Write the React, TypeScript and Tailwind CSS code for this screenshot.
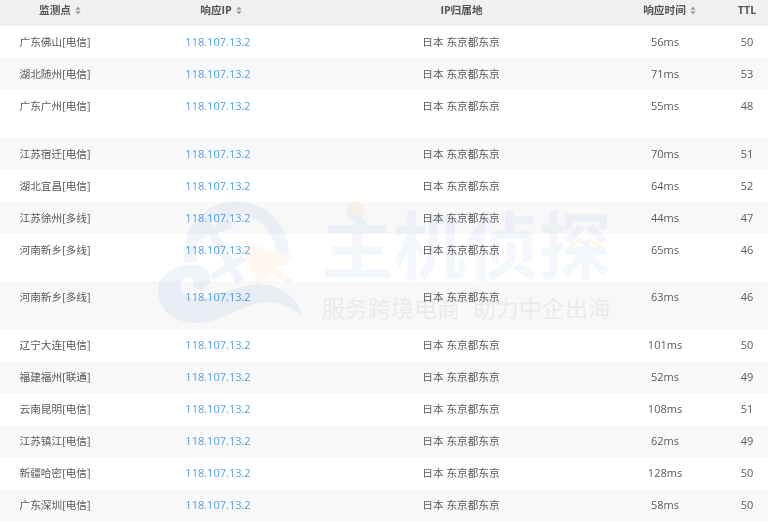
const rows: [string, string, string, string, number][] = [
  ["广东佛山[电信]", "56ms", "50", "h-8", 0],
  ["湖北随州[电信]", "71ms", "53", "h-8", 1],
  ["广东广州[电信]", "55ms", "48", "h-12", 0],
  ["江苏宿迁[电信]", "70ms", "51", "h-8", 1],
  ["湖北宜昌[电信]", "64ms", "52", "h-8", 0],
  ["江苏徐州[多线]", "44ms", "47", "h-8", 1],
  ["河南新乡[多线]", "65ms", "46", "h-[47px]", 0],
  ["河南新乡[多线]", "63ms", "46", "h-12", 1],
  ["辽宁大连[电信]", "101ms", "50", "h-8", 0],
  ["福建福州[联通]", "52ms", "49", "h-8", 1],
  ["云南昆明[电信]", "108ms", "51", "h-8", 0],
  ["江苏镇江[电信]", "62ms", "49", "h-8", 1],
  ["新疆哈密[电信]", "128ms", "50", "h-8", 0],
  ["广东深圳[电信]", "58ms", "50", "h-8", 1],
];

const gridCols = "grid grid-cols-[110px_216px_270px_138px_26px] pr-2 text-center";

function Sort() {
  return (
    <svg width="6" height="9" viewBox="0 0 6 9" className="ml-1 shrink-0">
      <path d="M3 0.5 L5.6 3.7 H0.4 Z M3 8.5 L5.6 5.3 H0.4 Z" fill="#9a9a9a" />
    </svg>
  );
}

function Head({ label, sort, pad }: { label: string; sort?: boolean; pad?: string }) {
  return (
    <div className={`flex items-center justify-center whitespace-nowrap ${pad ?? ""}`}>
      <span>{label}</span>
      {sort && <Sort />}
    </div>
  );
}

function Watermark() {
  return (
    <div className="absolute inset-0 overflow-hidden pointer-events-none mix-blend-multiply">
      <svg width="768" height="524" viewBox="0 0 768 524" className="absolute inset-0">
        <g fill="none" stroke="#f1f5fb">
          <path d="M191 262 A46 46 0 1 1 281 264" strokeWidth="13" />
          <path d="M207 224 L240 281" strokeWidth="9" />
          <path d="M236 206 L212 234" strokeWidth="7" />
          <path d="M188 240 L232 224" strokeWidth="7" />
          <path d="M212 277 L244 258" strokeWidth="7" />
        </g>
        <path
          d="M158 288 C160 270 180 263 195 265 C207 267 213 275 209 284 C205 291 196 291 192 285 C196 281 192 276 187 277 C179 279 178 290 186 296 C200 305 225 290 250 285 C272 281 296 292 303 317 C292 306 272 299 254 304 C236 309 222 322 196 323 C172 323 156 308 158 288 Z"
          fill="#eff3fa"
        />
        <path d="M238 240 L295 258 L275 268 L293 280 L288 284 L272 273 L256 283 Z" fill="#fef8f1" />
        <circle cx="355" cy="211" r="9.5" fill="#fef7ef" />
        <path d="M567 247 Q575 244 580 237 Q584 243 590 246 L586 248 Q580 245 578 242 Q575 246 570 249 Z M590 238 Q597 243 605 245 L603 248 Q595 246 588 241 Z" fill="#fef3e6" />
      </svg>
      <div className="absolute left-[321px] top-[192px] whitespace-nowrap text-[72.5px] font-bold leading-[100px] text-[#f3f6fc] font-['Noto_Sans_CJK_SC','Noto_Sans',sans-serif]">
        主机侦探
      </div>
      <div className="absolute left-[322px] top-[291px] flex gap-[13px] whitespace-nowrap text-[23px] leading-[32px] text-[#f1f1f1] font-['Noto_Sans_CJK_SC','Noto_Sans',sans-serif]">
        <span>服务跨境电商</span>
        <span>助力中企出海</span>
      </div>
    </div>
  );
}

export default function App() {
  return (
    <div className="relative w-[768px] h-[524px] overflow-hidden bg-white text-[#5a5a5a] text-[10.67px] leading-[14px] font-['Open_Sans','Noto_Sans_CJK_SC',sans-serif]">
      <div className="blur-[0.4px]">
        <div className={`${gridCols} h-[26px] items-start pt-[3px] bg-[#f0f0f0] font-bold text-[#555]`}>
          <Head label="监测点" sort pad="pl-[10px]" />
          <Head label="响应IP" sort pad="pl-[6px]" />
          <Head label="IP归属地" pad="pl-px" />
          <Head label="响应时间" sort pad="pl-[9px]" />
          <Head label="TTL" />
        </div>
        {rows.map(([name, time, ttl, h, alt], i) => (
          <div key={i} className={`${gridCols} ${h} pt-[9px] ${alt ? "bg-[#f8f8f8]" : "bg-white"}`}>
            <div className="whitespace-nowrap">{name}</div>
            <div className="whitespace-nowrap text-[#4f9ef0] text-[11px]">118.107.13.2</div>
            <div className="whitespace-nowrap">日本 东京都东京</div>
            <div className="whitespace-nowrap text-[11px]">{time}</div>
            <div className="whitespace-nowrap text-[11px]">{ttl}</div>
          </div>
        ))}
      </div>
      <Watermark />
    </div>
  );
}
